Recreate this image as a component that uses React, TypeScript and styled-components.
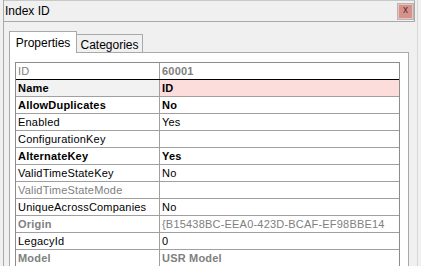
import styled, { createGlobalStyle } from "styled-components";

const GlobalStyle = createGlobalStyle`
  html, body { margin: 0; padding: 0; background: #f0f0f0; overflow: hidden; }
  body { font-family: "Liberation Sans", Arial, sans-serif; }
`;

type Prop = {
  name: string;
  value: string;
  bold?: boolean;
  boldValue?: boolean;
  muted?: boolean;
  selected?: boolean;
};

const props: Prop[] = [
  { name: "ID", value: "60001", muted: true, boldValue: true },
  { name: "Name", value: "ID", bold: true, boldValue: true, selected: true },
  { name: "AllowDuplicates", value: "No", bold: true, boldValue: true },
  { name: "Enabled", value: "Yes" },
  { name: "ConfigurationKey", value: "" },
  { name: "AlternateKey", value: "Yes", bold: true, boldValue: true },
  { name: "ValidTimeStateKey", value: "No" },
  { name: "ValidTimeStateMode", value: "", muted: true },
  { name: "UniqueAcrossCompanies", value: "No" },
  { name: "Origin", value: "{B15438BC-EEA0-423D-BCAF-EF98BBE14", muted: true, bold: true },
  { name: "LegacyId", value: "0" },
  { name: "Model", value: "USR Model", muted: true, bold: true, boldValue: true },
];

export default function App() {
  return (
    <>
      <GlobalStyle />
      <Window>
        <TitleBar>
          <Title>Index ID</Title>
          <CloseButton>x</CloseButton>
        </TitleBar>
        <Body>
          <TabStrip>
            <Tab active>Properties</Tab>
            <Tab>Categories</Tab>
          </TabStrip>
          <Panel>
            <Grid>
              {props.map((p) => (
                <Row key={p.name} selected={p.selected}>
                  <NameCell bold={p.bold} muted={p.muted} selected={p.selected}>
                    {p.name}
                  </NameCell>
                  <ValueCell bold={p.boldValue} muted={p.muted} selected={p.selected}>
                    {p.value}
                  </ValueCell>
                </Row>
              ))}
            </Grid>
          </Panel>
        </Body>
      </Window>
    </>
  );
}

const Window = styled.div`
  margin-left: 3px;
  width: 415px;
  height: 266px;
  box-sizing: border-box;
  border-left: 1px solid #a9a9a9;
  border-right: 1px solid #d6d6d6;
  overflow: hidden;
`;

const TitleBar = styled.div`
  width: 411px;
  height: 22px;
  box-sizing: border-box;
  border-top: 1px solid #c8c8c8;
  border-bottom: 1px solid #a9a9a9;
  border-right: 1px solid #a9a9a9;
  display: flex;
  align-items: center;
  justify-content: space-between;
  padding: 0 1px 0 1px;
`;

const Title = styled.span`
  font-size: 12px;
  color: #000;
`;

const CloseButton = styled.div`
  width: 15px;
  height: 15px;
  box-sizing: border-box;
  background: #d7918b;
  border: 1px solid #e8c4c0;
  outline: 1px solid #b5b5b5;
  display: flex;
  align-items: center;
  justify-content: center;
  font-size: 10px;
  line-height: 1;
  color: #4a3030;
  padding-bottom: 2px;
`;

const Body = styled.div`
  padding: 9px 0 0 5px;
`;

const TabStrip = styled.div`
  display: flex;
  align-items: flex-end;
  height: 21px;
  position: relative;
  z-index: 1;
`;

const Tab = styled.div<{ active?: boolean }>`
  box-sizing: border-box;
  font-size: 12px;
  color: #000;
  display: flex;
  align-items: center;
  justify-content: center;
  border: 1px solid #a9a9a9;
  border-bottom: none;
  height: ${(p) => (p.active ? "22px" : "18px")};
  margin-bottom: ${(p) => (p.active ? "-1px" : "0")};
  padding: ${(p) => (p.active ? "1px 0 0 0" : "2px 0 0 0")};
  width: ${(p) => (p.active ? "68px" : "66px")};
  background: ${(p) => (p.active ? "#ffffff" : "#f0f0f0")};
  ${(p) => (p.active ? "" : "border-left: none;")}
`;

const Panel = styled.div`
  width: 400px;
  height: 220px;
  box-sizing: border-box;
  background: #ffffff;
  border: 1px solid #a9a9a9;
  padding: 9px 8px 0 5px;
`;

const Grid = styled.div`
  width: 385px;
  box-sizing: border-box;
  border-left: 1px solid #8c8c8c;
  border-right: 1px solid #8c8c8c;
`;

const Row = styled.div<{ selected?: boolean }>`
  display: grid;
  grid-template-columns: 144px 1fr;
  height: 17px;
  box-sizing: border-box;
  border-top: 1px solid ${(p) => (p.selected ? "#000000" : "#a0a0a0")};
  &:first-child {
    border-top-color: #8c8c8c;
  }
`;

const Cell = styled.div<{ bold?: boolean; muted?: boolean; selected?: boolean }>`
  font-size: 11px;
  letter-spacing: 0.2px;
  line-height: 16px;
  height: 16px;
  white-space: nowrap;
  overflow: hidden;
  font-weight: ${(p) => (p.bold ? 700 : 400)};
  color: ${(p) => (p.muted ? "#808080" : "#000000")};
`;

const NameCell = styled(Cell)`
  border-right: 1px solid #a0a0a0;
  padding-left: 2px;
  background: ${(p) => (p.selected ? "#f2f2f2" : "#ffffff")};
`;

const ValueCell = styled(Cell)`
  padding-left: 2px;
  background: ${(p) => (p.selected ? "#fddcdc" : "#ffffff")};
`;
